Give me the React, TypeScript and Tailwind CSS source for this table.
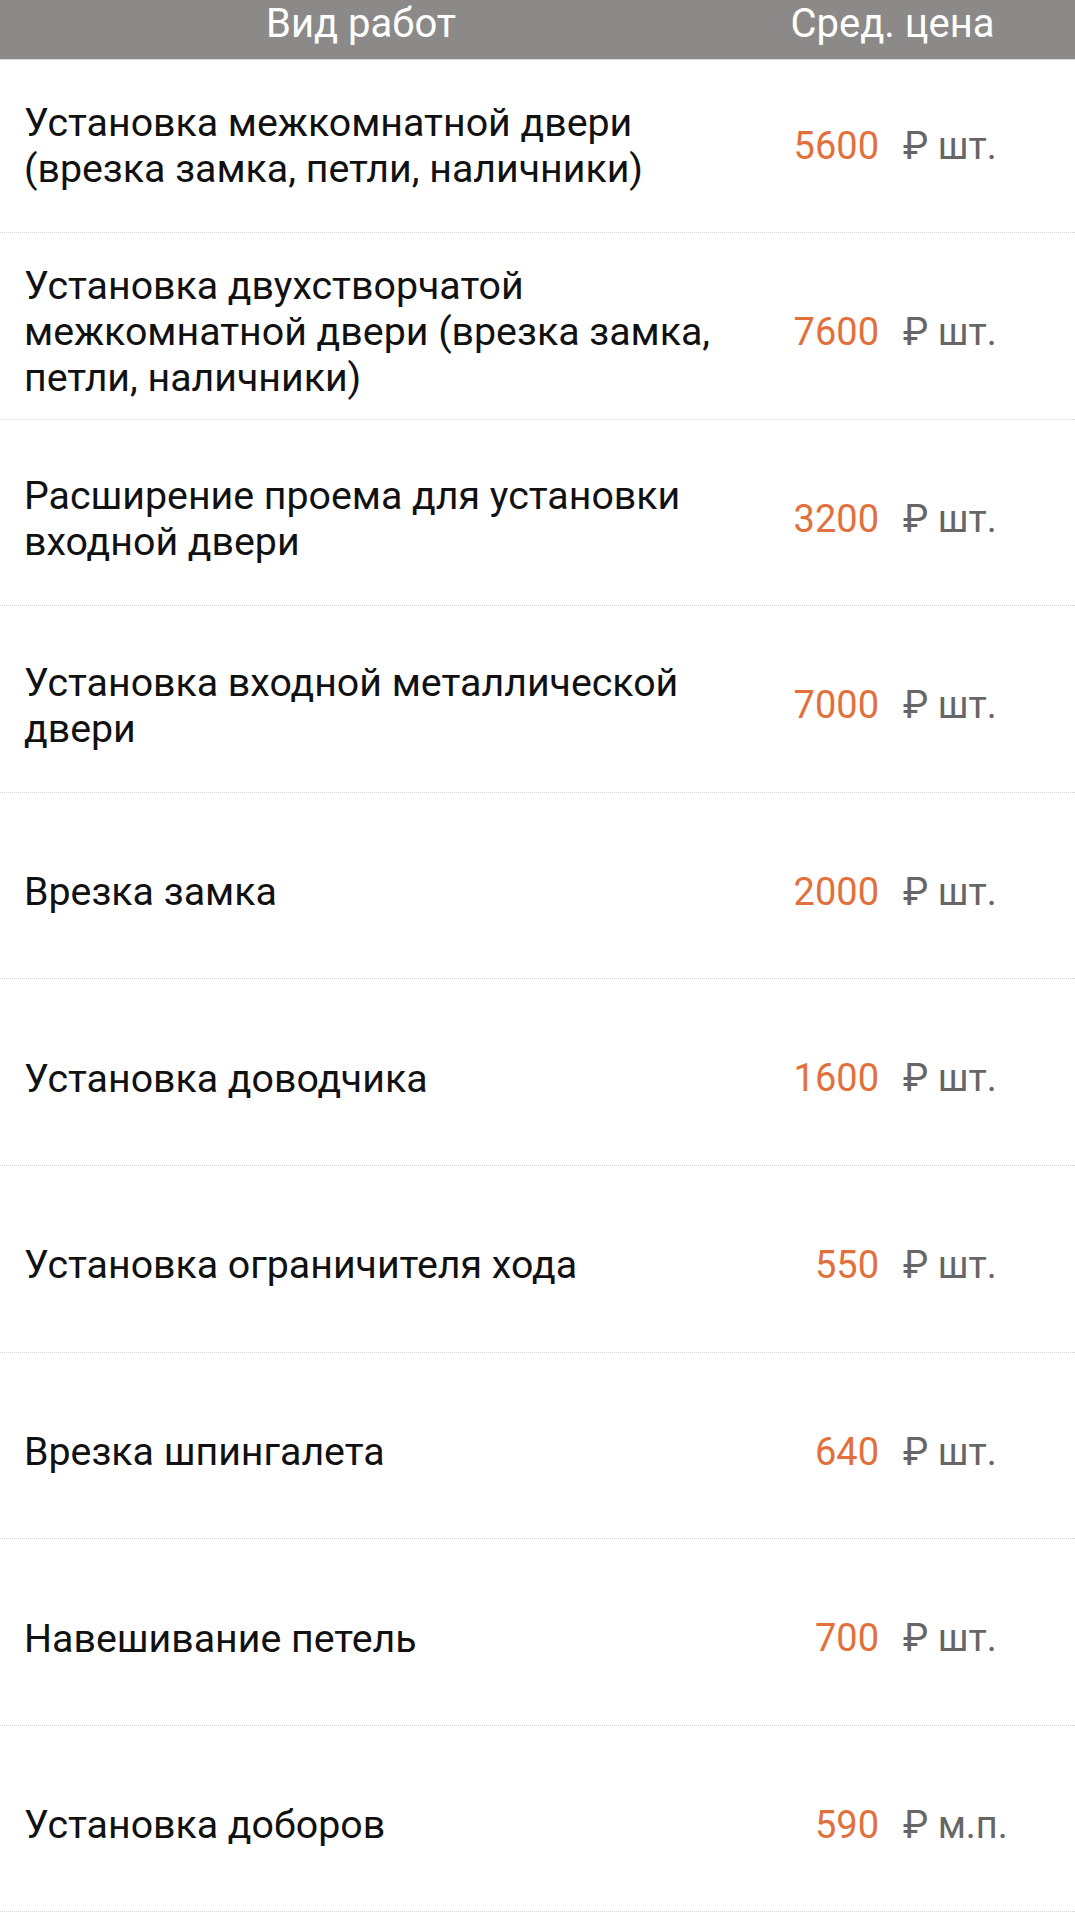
import React from "react";

type Row = { name: string; price: string; unit: string };

const rows: Row[] = [
  { name: "Установка межкомнатной двери (врезка замка, петли, наличники)", price: "5600", unit: "шт." },
  { name: "Установка двухстворчатой межкомнатной двери (врезка замка, петли, наличники)", price: "7600", unit: "шт." },
  { name: "Расширение проема для установки входной двери", price: "3200", unit: "шт." },
  { name: "Установка входной металлической двери", price: "7000", unit: "шт." },
  { name: "Врезка замка", price: "2000", unit: "шт." },
  { name: "Установка доводчика", price: "1600", unit: "шт." },
  { name: "Установка ограничителя хода", price: "550", unit: "шт." },
  { name: "Врезка шпингалета", price: "640", unit: "шт." },
  { name: "Навешивание петель", price: "700", unit: "шт." },
  { name: "Установка доборов", price: "590", unit: "м.п." },
];

export default function App() {
  return (
    <div
      className="w-[1075px] h-[1912px] overflow-hidden bg-white"
      style={{ fontFamily: "Roboto, 'Noto Sans', sans-serif" }}
    >
      <div className="flex h-[60px] items-start bg-[#8b8a89] text-white text-[40px] leading-[47px] border-b border-[#d9d9d9]">
        <div className="w-[722px] text-center">Вид работ</div>
        <div className="flex-1 pr-[12px] text-center">Сред. цена</div>
      </div>
      {rows.map((r, i) => (
        <div
          key={i}
          className={`flex items-center border-b border-dotted border-[#cfcfcf] ${
            i === 0 ? "h-[173px]" : "h-[186.6px] pt-[13.4px]"
          }`}
        >
          <div className="w-[759px] pl-[24px] pr-[16px] text-[39.3px] leading-[46px] text-[#111111]">
            {r.name}
          </div>
          <div className="w-[120px] text-right text-[38px] leading-[45px] text-[#e2703c]">{r.price}</div>
          <div className="ml-[24px] text-[38px] leading-[45px] text-[#666666] whitespace-nowrap">
            ₽ {r.unit}
          </div>
        </div>
      ))}
    </div>
  );
}
